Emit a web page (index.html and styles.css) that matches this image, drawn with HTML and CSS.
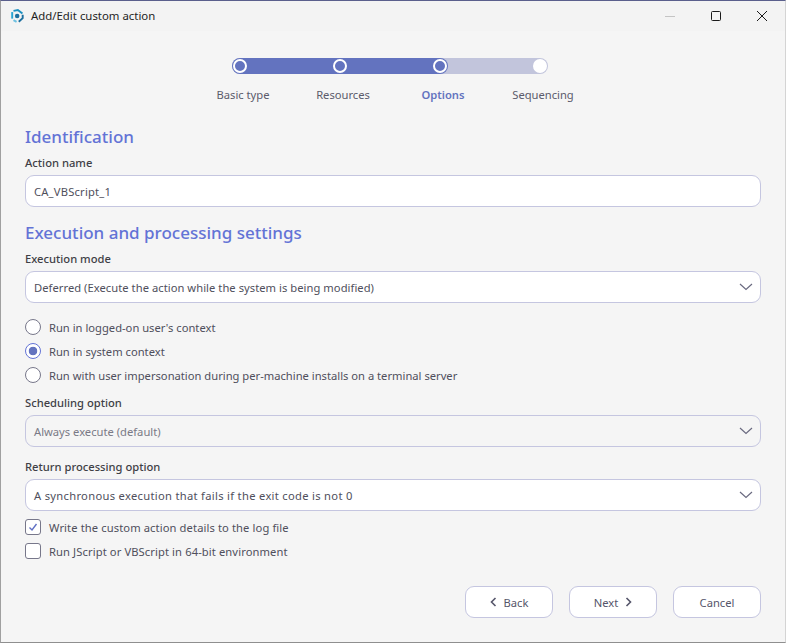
FILE: index.html
```html
<!DOCTYPE html>
<html lang="en">
<head>
<meta charset="utf-8">
<title>Add/Edit custom action</title>
<link rel="stylesheet" href="styles.css">
</head>
<body>
<div class="window">
  <header class="titlebar">
    <svg class="app-icon" width="14" height="14" viewBox="0 0 16 16" aria-hidden="true">
      <path d="M4 2.2 9 1.2 14.2 5.2" fill="none" stroke="#1c8fc0" stroke-width="2.2"/>
      <path d="M14.5 6.5V10.5L10 14.5" fill="none" stroke="#1c6f9f" stroke-width="2.2"/>
      <path d="M2.5 3.5V11" fill="none" stroke="#27a3d2" stroke-width="2.2"/>
      <path d="M4 12.8 7.5 14.8" fill="none" stroke="#6cc0e0" stroke-width="2.2"/>
      <circle cx="8.2" cy="8" r="2.6" fill="#1c6f9f"/>
    </svg>
    <span class="title">Add/Edit custom action</span>
    <div class="win-controls">
      <svg width="46" height="30" viewBox="0 0 46 30" aria-hidden="true"><path d="M18 15.5H28" stroke="#c4c4c4"/></svg>
      <svg width="46" height="30" viewBox="0 0 46 30" aria-hidden="true"><rect x="18.5" y="10.5" width="9" height="9" rx="1" fill="none" stroke="#1a1a1a"/></svg>
      <svg width="46" height="30" viewBox="0 0 46 30" aria-hidden="true"><path d="M18 10 28 20M28 10 18 20" stroke="#1a1a1a" fill="none"/></svg>
    </div>
  </header>

  <main class="content">
    <section class="stepper">
      <div class="track">
        <div class="track-fill"></div>
        <span class="dot"></span>
        <span class="dot"></span>
        <span class="dot"></span>
        <span class="dot dot-todo"></span>
      </div>
      <div class="step-labels">
        <span>Basic type</span>
        <span>Resources</span>
        <span class="step-active">Options</span>
        <span>Sequencing</span>
      </div>
    </section>

    <h2 class="heading">Identification</h2>
    <label class="field-label">Action name</label>
    <div class="box tracked-sm">CA_VBScript_1</div>

    <h2 class="heading heading-second">Execution and processing settings</h2>
    <label class="field-label">Execution mode</label>
    <div class="box select">
      <span class="tracked-xxs">Deferred (Execute the action while the system is being modified)</span>
      <svg class="chevron" width="14" height="8" viewBox="0 0 14 8" aria-hidden="true"><path d="M1 1 7 6.5 13 1"/></svg>
    </div>

    <div class="options radios">
      <div class="option"><span class="radio"></span>Run in logged-on user's context</div>
      <div class="option"><span class="radio radio-on"></span>Run in system context</div>
      <div class="option"><span class="radio"></span>Run with user impersonation during per-machine installs on a terminal server</div>
    </div>

    <label class="field-label label-scheduling">Scheduling option</label>
    <div class="box select disabled">
      <span>Always execute (default)</span>
      <svg class="chevron" width="14" height="8" viewBox="0 0 14 8" aria-hidden="true"><path d="M1 1 7 6.5 13 1"/></svg>
    </div>

    <label class="field-label label-return">Return processing option</label>
    <div class="box select">
      <span class="tracked-lg">A synchronous execution that fails if the exit code is not 0</span>
      <svg class="chevron" width="14" height="8" viewBox="0 0 14 8" aria-hidden="true"><path d="M1 1 7 6.5 13 1"/></svg>
    </div>

    <div class="options checks">
      <div class="option tracked-xs">
        <span class="check">
          <svg width="14" height="14" viewBox="0 0 14 14" aria-hidden="true"><path d="M3.5 7.5 6 10 10.5 4" fill="none" stroke="#5f6fc4" stroke-width="1.4"/></svg>
        </span>Write the custom action details to the log file
      </div>
      <div class="option tracked-xs"><span class="check"></span>Run JScript or VBScript in 64-bit environment</div>
    </div>

    <footer class="actions">
      <button class="btn" type="button">
        <svg width="7" height="10" viewBox="0 0 7 10" aria-hidden="true"><path d="M5.5 1 1.5 5 5.5 9"/></svg>
        Back
      </button>
      <button class="btn" type="button">
        Next
        <svg width="7" height="10" viewBox="0 0 7 10" aria-hidden="true"><path d="M1.5 1 5.5 5 1.5 9"/></svg>
      </button>
      <button class="btn" type="button">Cancel</button>
    </footer>
  </main>
</div>
</body>
</html>
```
FILE: styles.css
```css
* { box-sizing: border-box; }
html, body { margin: 0; padding: 0; }
body {
  width: 786px;
  height: 643px;
  overflow: hidden;
  font-family: "Noto Sans", "Open Sans", sans-serif;
  font-size: 11.2px;
  color: #4f4f5c;
  background: #f5f5f5;
}
.window {
  width: 786px;
  height: 643px;
  display: flex;
  flex-direction: column;
  background: #f5f5f5;
  border-top: 1px solid #5a5f8c;
  border-left: 1px solid #a0a0a0;
  border-bottom: 1px solid #8f8f8f;
  border-right: 1px solid #d4d4d4;
}
.titlebar {
  height: 30px;
  flex: none;
  display: flex;
  align-items: center;
  padding-left: 9px;
  background: #f3f3f3;
}
.app-icon { flex: none; margin-bottom: 1px; }
.title { margin-left: 7px; margin-bottom: 2px; font-size: 11.4px; color: #1f1f1f; }
.win-controls { margin-left: auto; display: flex; }
.win-controls svg { display: block; }
.content {
  flex: 1;
  display: flex;
  flex-direction: column;
  padding: 0 24px 0 24px;
}
.stepper {
  display: flex;
  flex-direction: column;
  align-items: center;
  padding-top: 27px;
}
.track {
  position: relative;
  width: 316px;
  height: 16px;
  padding: 0 1px;
  margin-left: -7px;
  display: flex;
  align-items: center;
  justify-content: space-between;
  border-radius: 8px;
  background: #c2c5dc;
}
.track-fill {
  position: absolute;
  left: 0;
  top: 0;
  width: 216px;
  height: 16px;
  border-radius: 8px;
  background: #6373bf;
}
.dot {
  position: relative;
  width: 14px;
  height: 14px;
  border-radius: 50%;
  border: 2px solid #fff;
  background: #6373bf;
}
.dot-todo { background: #fff; border-color: #fff; }
.step-labels {
  display: flex;
  margin-top: 12px;
}
.step-labels span {
  width: 100px;
  text-align: center;
  line-height: 18px;
  color: #5b5b6b;
}
.step-labels .step-active { color: #6373bf; font-weight: 600; }
.heading {
  margin: 0;
  font-size: 17px;
  line-height: 26px;
  font-weight: 500;
  color: #6373d6;
}
.stepper + .heading { margin-top: 20px; }
.heading-second { margin-top: 13px; }
.field-label {
  display: block;
  font-weight: 500;
  line-height: 18px;
  color: #3f3f46;
  margin-top: 4px;
}
.box {
  height: 32px;
  margin-top: 3px;
  padding: 0 8px;
  display: flex;
  align-items: center;
  justify-content: space-between;
  background: #fff;
  border: 1px solid #c5c6e0;
  border-radius: 9px;
  color: #4f4f5c;
}
.select { padding-right: 7px; }
.disabled { background: #f5f5f5; color: #7a7a86; }
.tracked-xxs { letter-spacing: 0.04px; }
.tracked-xs { letter-spacing: 0.1px; }
.tracked-sm { letter-spacing: 0.2px; }
.tracked-lg { letter-spacing: 0.3px; }
.chevron { flex: none; }
.chevron path { fill: none; stroke: #6a6a80; stroke-width: 1.2; }
.options { display: flex; flex-direction: column; gap: 6px; }
.radios { margin-top: 15px; }
.checks { margin-top: 7px; }
.option { display: flex; align-items: center; height: 18px; color: #4f4f5c; }
.radio {
  width: 16px;
  height: 16px;
  margin-right: 8px;
  flex: none;
  border-radius: 50%;
  border: 1px solid #77778a;
  background: #fff;
}
.radio-on {
  border-color: #6373d6;
  background: radial-gradient(circle, #6373bf 0 4px, #fff 4.6px);
}
.check {
  width: 16px;
  height: 16px;
  margin-right: 8px;
  flex: none;
  display: flex;
  align-items: center;
  justify-content: center;
  border: 1px solid #77778a;
  border-radius: 3px;
  background: #fff;
}
.label-scheduling { margin-top: 10px; }
.label-return { margin-top: 11px; }
.actions {
  margin-top: auto;
  margin-bottom: 24px;
  display: flex;
  justify-content: flex-end;
  gap: 16px;
}
.btn {
  width: 88px;
  height: 32px;
  display: flex;
  align-items: center;
  justify-content: center;
  gap: 7px;
  font: inherit;
  color: #55556a;
  background: #fff;
  border: 1px solid #c5c6e0;
  border-radius: 9px;
  padding: 0;
}
.btn svg path { fill: none; stroke: #55556a; stroke-width: 1.6; }
```
